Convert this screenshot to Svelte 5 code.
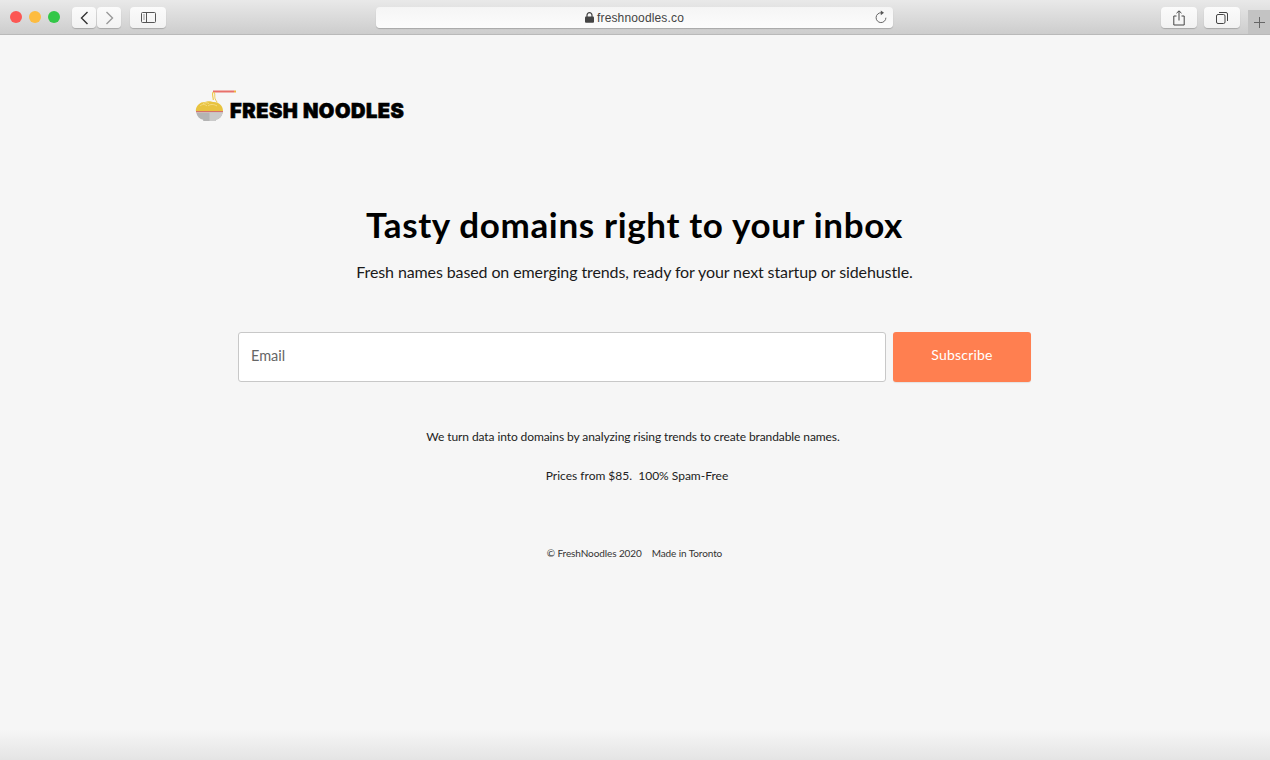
<script lang="ts">
    let email = $state("")
</script>

<div class="window">
    <header class="toolbar">
        <div class="lights">
            <span class="light red"></span>
            <span class="light yellow"></span>
            <span class="light green"></span>
        </div>
        <div class="nav">
            <button class="tool back" aria-label="Back">
                <svg width="9" height="14" viewBox="0 0 9 14"><path d="M7.500 1 1.500 7l6 6" fill="none" stroke="#333" stroke-width="1.400"/></svg>
            </button>
            <button class="tool forward" aria-label="Forward">
                <svg width="9" height="14" viewBox="0 0 9 14"><path d="M1.500 1l6 6-6 6" fill="none" stroke="#999" stroke-width="1.400"/></svg>
            </button>
        </div>
        <button class="tool sidebar" aria-label="Sidebar">
            <svg width="15" height="11" viewBox="0 0 15 11">
                <rect x=".5" y=".5" width="14" height="10" rx="1" fill="none" stroke="#555"/>
                <path d="M5.500 .5v10" stroke="#555"/>
                <path d="M2 3h2M2 5h2M2 7h2" stroke="#999"/>
            </svg>
        </button>
        <div class="address">
            <span class="url">
                <svg width="9" height="11" viewBox="0 0 9 11">
                    <path d="M2 5V3.200a2.500 2.500 0 0 1 5 0V5" fill="none" stroke="#444" stroke-width="1.200"/>
                    <rect y="4.600" width="9" height="6.200" rx="1" fill="#444"/>
                </svg>
                freshnoodles.co
            </span>
            <svg class="reload" width="13" height="14" viewBox="0 0 13 14">
                <path d="M7.500 2.800a4.900 4.900 0 1 0 4.400 4.900" fill="none" stroke="#666" stroke-width="1"/>
                <path d="M6.800 0.400 10 2.800 6.800 5.200z" fill="#555"/>
            </svg>
        </div>
        <div class="actions">
            <button class="tool share" aria-label="Share">
                <svg width="12" height="16" viewBox="0 0 12 16">
                    <path d="M3.500 6H.8v9h10.400V6H8.500M6 10.500V1M3.500 3.200 6 .8l2.500 2.400" fill="none" stroke="#444"/>
                </svg>
            </button>
            <button class="tool tabs" aria-label="Show tabs">
                <svg width="12" height="12" viewBox="0 0 12 12">
                    <rect x=".5" y="2.500" width="8.500" height="9" rx="1.500" fill="none" stroke="#444"/>
                    <path d="M3 .5h7a1.500 1.500 0 0 1 1.500 1.500v7" fill="none" stroke="#444"/>
                </svg>
            </button>
        </div>
        <div class="newtab">
            <svg width="11" height="11" viewBox="0 0 11 11"><path d="M5.500 0v11M0 5.500h11" stroke="#666"/></svg>
        </div>
    </header>

    <main>
        <a class="logo" href="/">
            <svg class="bowl" width="30" height="34" viewBox="0 0 30 34">
                <!-- chopsticks -->
                <path d="M18 3.500h21" stroke="#e8706a" stroke-width="2"/>
                <path d="M39 3.500h2" stroke="#f0b040" stroke-width="2"/>
                <!-- strands -->
                <path d="M18 4c-1.500 3 .5 5 .3 8" fill="none" stroke="#efc94c" stroke-width="1.200"/>
                <path d="M19 4c2 3-1 5 3 10" fill="none" stroke="#efc94c" stroke-width="1"/>
                <!-- noodles -->
                <path d="M.8 23C.8 17 6 13.500 10 14c2-1 6-1 8 0 5-.5 10 3 10 9z" fill="#e8c33f"/>
                <path d="M5 18c2-2 5-2 7 0M13 18c2-2 6-2 9 0M8 15.500c2-1 4-1 6 0" fill="none" stroke="#f5dc80" stroke-width="1"/>
                <!-- bowl -->
                <path d="M1 23h27v1.400H1z" fill="#d4706a"/>
                <path d="M1.200 24.400h26.600c-.8 4-3.500 6.600-7 7.300V33H8.200v-1.300C4.700 31 2 28.400 1.200 24.400z" fill="#b4b4b4"/>
                <path d="M14.500 24.400h13.300c-.8 4-3.500 6.600-7 7.300V33h-6.300z" fill="#cacaca"/>
            </svg>
            <span>FRESH NOODLES</span>
        </a>

        <section class="hero">
            <h1>Tasty domains right to your inbox</h1>
            <p class="lead">Fresh names based on emerging trends, ready for your next startup or sidehustle.</p>

            <form class="signup" onsubmit={(e) => e.preventDefault()}>
                <input type="email" placeholder="Email" bind:value={email} />
                <button type="submit">Subscribe</button>
            </form>

            <p class="note first">We turn data into domains by analyzing rising trends to create brandable names.</p>
            <p class="note second">Prices from $85.&nbsp; 100% Spam-Free</p>

            <footer>
                <span>© FreshNoodles 2020</span>
                <span>Made in Toronto</span>
            </footer>
        </section>
    </main>
    <div class="bottom-fade"></div>
</div>

<style>
    :global(body) {
        margin: 0;
        background: #f6f6f6;
    }

    .window {
        width: 1270px;
        height: 760px;
        display: flex;
        flex-direction: column;
        position: relative;
        overflow: hidden;
        background: #f6f6f6;
        font-family: "Lato", "Noto Sans", sans-serif;
        color: #111;
    }

    .toolbar {
        height: 35px;
        flex: none;
        display: flex;
        align-items: flex-start;
        box-sizing: border-box;
        padding-top: 7px;
        background: linear-gradient(#e9e9e9, #cdcdcd);
        border-bottom: 1px solid #b9b9b9;
        position: relative;
    }

    .lights {
        display: flex;
        gap: 7px;
        margin: 4px 0 0 10px;
    }

    .light {
        width: 12px;
        height: 12px;
        border-radius: 50%;
    }

    .red { background: #fc5753; }
    .yellow { background: #fdbc40; }
    .green { background: #33c748; }

    .tool {
        all: unset;
        box-sizing: border-box;
        height: 21px;
        background: linear-gradient(#fbfbfb, #f2f2f2);
        border-radius: 4px;
        box-shadow: 0 1px 1px rgba(0, 0, 0, 0.2);
        display: flex;
        align-items: center;
        justify-content: center;
    }

    .nav {
        display: flex;
        gap: 1px;
        margin-left: 12px;
    }

    .back, .forward {
        width: 24px;
    }

    .sidebar {
        width: 36px;
        margin-left: 9px;
    }

    .address {
        width: 517px;
        height: 21px;
        margin-left: 210px;
        position: relative;
        display: flex;
        align-items: center;
        justify-content: center;
        background: linear-gradient(#f5f5f5, #fcfcfc);
        border-radius: 4px;
        box-shadow: 0 1px 1px rgba(0, 0, 0, 0.2);
    }

    .url {
        display: flex;
        align-items: center;
        gap: 3px;
        font-family: "Liberation Sans", sans-serif;
        font-size: 12px;
        letter-spacing: 0.15px;
        color: #444;
    }

    .reload {
        position: absolute;
        right: 6px;
        top: 3px;
    }

    .actions {
        display: flex;
        gap: 7px;
        margin-left: 268px;
    }

    .share, .tabs {
        width: 36px;
    }

    .newtab {
        position: absolute;
        right: 0;
        top: 10px;
        width: 22px;
        height: 24px;
        background: #c3c3c3;
        display: flex;
        align-items: center;
        justify-content: center;
    }

    main {
        flex: 1;
        padding: 53px 0 0 195px;
        display: flex;
        flex-direction: column;
        align-items: flex-start;
    }

    .logo {
        display: flex;
        align-items: flex-end;
        gap: 5px;
        height: 34px;
        text-decoration: none;
        color: #000;
    }

    .bowl {
        overflow: visible;
        flex: none;
    }

    .logo span {
        font-family: "Inter", "Roboto", sans-serif;
        font-weight: 900;
        font-size: 20px;
        line-height: 22px;
        letter-spacing: 0.55px;
        -webkit-text-stroke: 0.6px #000;
        white-space: nowrap;
    }

    .hero {
        width: 793px;
        margin: 80px 0 0 43px;
        display: flex;
        flex-direction: column;
        align-items: center;
    }

    h1 {
        margin: 0;
        font-size: 35px;
        line-height: 44px;
        font-weight: 700;
        letter-spacing: 0.65px;
        color: #000;
    }

    .lead {
        margin: 14px 0 0;
        font-size: 16px;
        line-height: 24px;
        letter-spacing: -0.11px;
        color: #1a1a1a;
    }

    .signup {
        width: 100%;
        margin-top: 48px;
        display: flex;
        gap: 7px;
    }

    input {
        flex: 1;
        min-width: 0;
        height: 50px;
        box-sizing: border-box;
        padding: 0 12px 4px;
        border: 1px solid #c8c8c8;
        border-radius: 3px;
        background: #fff;
        font: 14.500px "Lato", sans-serif;
        color: #333;
        outline: none;
    }

    input::placeholder {
        color: #666;
        opacity: 1;
    }

    .signup button {
        all: unset;
        width: 138px;
        height: 50px;
        box-sizing: border-box;
        padding-bottom: 4px;
        text-align: center;
        line-height: 20px;
        background: #ff7f50;
        border-radius: 3px;
        color: #fff;
        font-size: 14px;
        font-weight: 400;
        letter-spacing: 0.2px;
        box-shadow: 0 1px 1px rgba(0, 0, 0, 0.08);
    }

    .note {
        margin: 0;
        font-size: 12px;
        line-height: 16px;
        color: #222;
    }

    .first {
        margin-top: 47px;
        padding-right: 3px;
        letter-spacing: -0.09px;
    }

    .second {
        margin-top: 23px;
        padding-left: 5px;
    }

    footer {
        margin-top: 62px;
        display: flex;
        gap: 10px;
        font-size: 10px;
        line-height: 14px;
        letter-spacing: -0.1px;
        color: #333;
    }

    .bottom-fade {
        position: absolute;
        left: 0;
        right: 0;
        bottom: 0;
        height: 30px;
        background: linear-gradient(rgba(225, 225, 225, 0), #e4e4e4);
    }
</style>
